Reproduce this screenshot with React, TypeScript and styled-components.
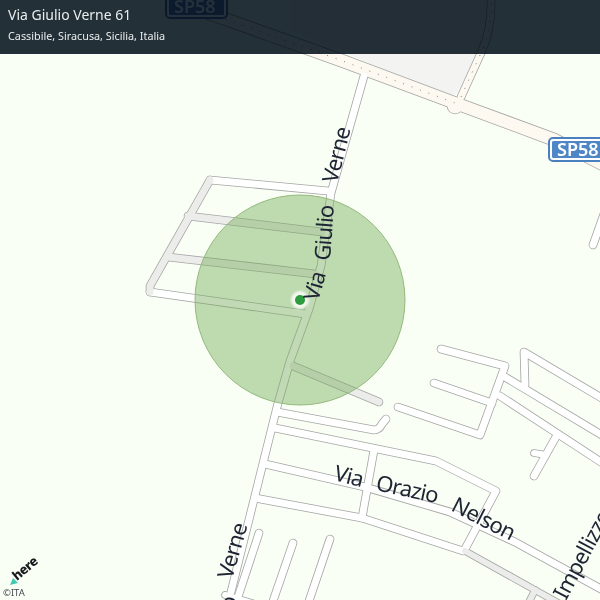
import React from "react";
import styled, { createGlobalStyle } from "styled-components";

const GlobalStyle = createGlobalStyle`
  html, body {
    margin: 0;
    padding: 0;
    background: #fafff5;
  }
`;

const MapCanvas = styled.div`
  position: relative;
  width: 600px;
  height: 600px;
  overflow: hidden;
  background: #fafff5;
  font-family: "Noto Sans", "Open Sans", sans-serif;
`;

const MapSvg = styled.svg`
  display: block;
  width: 600px;
  height: 600px;
`;

const Header = styled.header`
  position: absolute;
  top: 0;
  left: 0;
  right: 0;
  height: 54px;
  box-sizing: border-box;
  padding: 5px 8px 0;
  color: #e9edee;

  /* the map shows through: white stays flat, dark lines get darker */
  &::before {
    content: "";
    position: absolute;
    inset: 0;
    background: #24303a;
    mix-blend-mode: multiply;
  }
`;

const Title = styled.div`
  position: relative;
  font-size: 14px;
  line-height: 19px;
`;

const Subtitle = styled.div`
  position: relative;
  margin-top: 4px;
  font-size: 10.8px;
  line-height: 15px;
`;

const Attribution = styled.div`
  position: absolute;
  left: 3px;
  bottom: 2px;
  font-size: 9.5px;
  line-height: 10px;
  color: #444b50;
`;

const Casing = styled.path<{ $w: number }>`
  fill: none;
  stroke: #a4a6a5;
  stroke-width: ${(p) => p.$w + 1.6}px;
  stroke-linecap: round;
  stroke-linejoin: round;
`;

const RoadFill = styled.path<{ $w: number; $color: string }>`
  fill: none;
  stroke: ${(p) => p.$color};
  stroke-width: ${(p) => p.$w}px;
  stroke-linecap: round;
  stroke-linejoin: round;
`;

const RoadDots = styled.path`
  fill: none;
  stroke: #77776f;
  stroke-width: 0.9px;
  stroke-dasharray: 1 8;
`;

const Area = styled.path`
  fill: #f3f3f2;
`;

const Accuracy = styled.circle`
  fill: rgba(118, 172, 92, 0.45);
  stroke: #94b97c;
  stroke-width: 1px;
`;

const PinHalo = styled.circle`
  fill: #f4f7f0;
  filter: blur(1.2px);
`;

const PinDot = styled.circle`
  fill: #2c9c3c;
`;

const Label = styled.text`
  font-family: "Noto Sans", "Open Sans", sans-serif;
  font-size: 22px;
  letter-spacing: -0.8px;
  fill: #1d2433;
`;

const ShieldFrame = styled.rect`
  fill: #ffffff;
  stroke: #4b80c0;
  stroke-width: 2px;
`;

const ShieldInner = styled.rect`
  fill: #4e86c6;
`;

const ShieldText = styled.text`
  font-family: "Noto Sans", "Open Sans", sans-serif;
  font-size: 18px;
  font-weight: 600;
  fill: #ffffff;
`;

const LogoText = styled.text`
  font-family: "Noto Sans", "Open Sans", sans-serif;
  font-size: 13px;
  font-weight: 800;
  letter-spacing: -0.4px;
  fill: #16191b;
`;

const LogoMark = styled.path`
  fill: #3fc9b4;
`;

const WHITE = "#ffffff";
const GREY = "#ececea";
const CREAM = "#fdf9f0";

const roads = [
  // SP58 and the road going north from the roundabout
  { d: "M200 10 L340 60 L455 103 L555 140 L610 168", w: 12, color: CREAM },
  { d: "M461 97 L481 53 C488 38 492 20 491 -4", w: 7, color: CREAM },
  { d: "M455 106 L455.1 106", w: 15, color: CREAM },
  // Via Giulio Verne
  { d: "M364 76 L331 193 L321 266 L309 309 L290 361 L277 407 L231 592", w: 7, color: WHITE },
  // block on the left of the pin
  { d: "M210 180 L328 191", w: 7, color: WHITE },
  { d: "M150 292 L305 314", w: 7, color: WHITE },
  { d: "M210 180 L150 286 L150 292", w: 7, color: GREY },
  { d: "M188 216 L322 232", w: 7, color: GREY },
  { d: "M168 257 L315 274", w: 7, color: GREY },
  { d: "M293 366 L379 402", w: 7, color: GREY },
  // east blocks
  { d: "M441 349 L505 366 L480 435 L398 407", w: 7, color: WHITE },
  { d: "M434 383 L492 403", w: 7, color: WHITE },
  { d: "M525 385 L524 352 L610 403", w: 7, color: WHITE },
  { d: "M505 377 L610 440", w: 7, color: WHITE },
  { d: "M500 396 L610 468", w: 7, color: WHITE },
  { d: "M557 435 L534 476", w: 7, color: WHITE },
  { d: "M534 453 L546 455", w: 6, color: WHITE },
  // around Via Orazio Nelson
  { d: "M277 412 L374 430 Q379 430 382 424 L386 419", w: 7, color: WHITE },
  { d: "M275 428 L436 461 L496 491 L465 549", w: 7, color: WHITE },
  { d: "M265 464 L365 487 L450 512 L515 542 L610 594", w: 7, color: WHITE },
  { d: "M374 450 L362 518", w: 7, color: WHITE },
  { d: "M255 498 L362 518 L463 551", w: 7, color: WHITE },
  { d: "M465 551 L535 590 L560 604", w: 6, color: GREY },
  { d: "M535 590 L528 604", w: 6, color: GREY },
  // stubs at the bottom
  { d: "M259 533 L238 597", w: 7, color: WHITE },
  { d: "M293 543 L272 604", w: 7, color: WHITE },
  { d: "M330 539 L308 604", w: 7, color: WHITE },
  { d: "M225 595 L262 606", w: 6, color: WHITE },
  { d: "M593 245 L604 214", w: 7, color: WHITE },
];

const labels = [
  { text: "Via", x: 318, y: 302, angle: -74 },
  { text: "Giulio", x: 330, y: 261, angle: -86 },
  { text: "Verne", x: 337, y: 184, angle: -76 },
  { text: "Via", x: 333, y: 480, angle: 14 },
  { text: "Orazio", x: 375, y: 490, angle: 12 },
  { text: "Nelson", x: 450, y: 510, angle: 27 },
  { text: "Verne", x: 232, y: 580, angle: -74 },
  { text: "Giulio", x: 222, y: 652, angle: -74 },
  { text: "Impellizzeri", x: 566, y: 601, angle: -62 },
];

const Shield = ({ x, y }: { x: number; y: number }) => (
  <g>
    <ShieldFrame x={x} y={y} width={61} height={23} rx={4} />
    <ShieldInner x={x + 3} y={y + 3} width={55} height={17} rx={1.5} />
    <ShieldText x={x + 8} y={y + 18}>
      SP58
    </ShieldText>
  </g>
);

const App = () => {
  return (
    <MapCanvas>
      <GlobalStyle />
      <MapSvg viewBox="0 0 600 600">
        <Area d="M290 30 L448 96 Q453 97 457 93 L478 53 L490 -4 L290 -4 Z" />
        {roads.map((r) => (
          <Casing key={r.d} d={r.d} $w={r.w} />
        ))}
        {roads.map((r) => (
          <RoadFill key={r.d} d={r.d} $w={r.w} $color={r.color} />
        ))}
        <RoadDots d="M200 10 L340 60 L455 103" />
        <RoadDots d="M461 97 L481 53 C488 38 492 20 491 -4" />
        <Accuracy cx={300} cy={300} r={105} />
        <PinHalo cx={300} cy={300} r={9} />
        <PinDot cx={300} cy={300} r={5} />
        {labels.map((l) => (
          <Label key={l.text + l.x} transform={`translate(${l.x} ${l.y}) rotate(${l.angle})`}>
            {l.text}
          </Label>
        ))}
        <Shield x={166} y={-5} />
        <Shield x={549} y={138} />
        <LogoMark d="M10 585 L18 583 L13 578 Z" />
        <LogoText transform="translate(17 581) rotate(-40)">here</LogoText>
      </MapSvg>
      <Header>
        <Title>Via Giulio Verne 61</Title>
        <Subtitle>Cassibile, Siracusa, Sicilia, Italia</Subtitle>
      </Header>
      <Attribution>©ITA</Attribution>
    </MapCanvas>
  );
};

export default App;
